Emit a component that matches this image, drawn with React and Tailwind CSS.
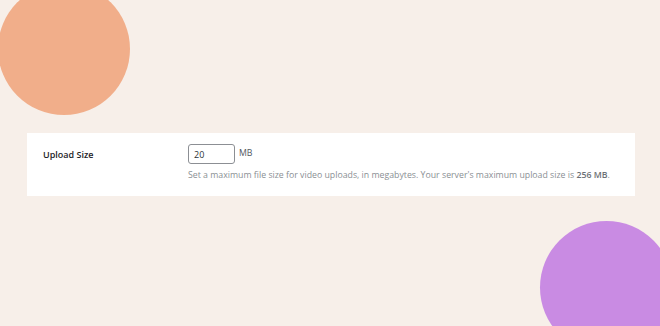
import React from "react";

export default function App() {
  return (
    <div
      className="relative h-[326px] w-full overflow-hidden bg-[#f7efe9]"
      style={{ fontFamily: '"Open Sans", "Noto Sans", sans-serif' }}
    >
      <div className="absolute left-[-2px] top-[-17px] h-[132px] w-[132px] rounded-full bg-[#f1ae8a]" />
      <div className="absolute left-[540px] top-[221px] h-[133px] w-[133px] rounded-full bg-[#c98be3]" />

      <div className="relative ml-[27px] mt-[133px] flex h-[63px] w-[608px] bg-white px-4 pt-[11px]">
        <div className="w-[145px] pt-[4px] text-[9px] font-semibold text-[#1d2327]">Upload Size</div>
        <div className="flex flex-col">
          <div className="flex items-center gap-1">
            <input
              defaultValue="20"
              className="h-[20px] w-[47px] rounded-[3px] border border-[#8c8f94] px-[5px] text-[9px] text-[#2c3338] outline-none"
            />
            <span className="text-[8.75px] text-[#50575e]">MB</span>
          </div>
          <p className="mt-[5px] text-[8.75px] text-[#8a8f94]">
            Set a maximum file size for video uploads, in megabytes. Your server's maximum upload size is{" "}
            <span className="font-semibold text-[#6c7075]">256 MB</span>.
          </p>
        </div>
      </div>
    </div>
  );
}
